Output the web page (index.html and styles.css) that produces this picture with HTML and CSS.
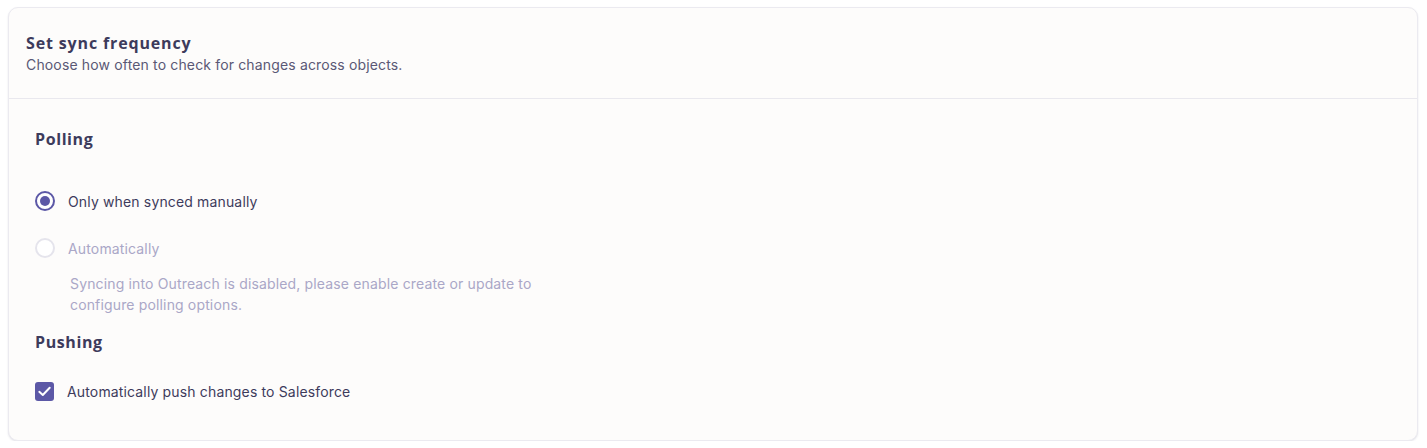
FILE: index.html
```html
<!DOCTYPE html>
<html lang="en">
<head>
<meta charset="utf-8">
<title>Set sync frequency</title>
<link rel="stylesheet" href="styles.css">
</head>
<body>
<section class="card">
  <header class="card-header">
    <h2 class="card-title">Set sync frequency</h2>
    <p class="card-subtitle">Choose how often to check for changes across objects.</p>
  </header>
  <div class="card-body">
    <h3 class="section-title">Polling</h3>
    <div class="options">
      <label class="option">
        <span class="radio radio-checked"><span class="radio-dot"></span></span>
        <span class="option-label">Only when synced manually</span>
      </label>
      <label class="option option-disabled">
        <span class="radio radio-disabled"></span>
        <span class="option-label">Automatically</span>
      </label>
      <p class="help">Syncing into Outreach is disabled, please enable create or update to configure polling options.</p>
    </div>
    <h3 class="section-title pushing">Pushing</h3>
    <label class="option check-option">
      <span class="checkbox">
        <svg width="15" height="15" viewBox="0 0 15 15"><path d="M2.3 7.8 L5.8 11 L12.7 3.8" fill="none" stroke="#fff" stroke-width="2" stroke-linecap="round" stroke-linejoin="round"/></svg>
      </span>
      <span class="option-label">Automatically push changes to Salesforce</span>
    </label>
  </div>
</section>
</body>
</html>
```
FILE: styles.css
```css
html, body {
  margin: 0;
  padding: 0;
  background: #ffffff;
}
body {
  padding: 7px 9px 0 8px;
  font-family: Inter, Roboto, "Liberation Sans", sans-serif;
  color: #3d3b5c;
  letter-spacing: 0.15px;
}
.card {
  background: #fdfcfb;
  border: 1px solid #ebeaf0;
  border-radius: 10px;
  box-shadow: 0 1px 2px rgba(60, 58, 90, 0.14);
  height: 434px;
  box-sizing: border-box;
}
.card-header {
  padding: 25px 17px 0 17px;
  height: 91px;
  box-sizing: border-box;
  border-bottom: 1px solid #e9e8ee;
}
.card-title {
  margin: 0;
  font-family: "Open Sans", Inter, sans-serif;
  font-weight: 700;
  font-size: 16px;
  line-height: 20px;
  letter-spacing: 0.85px;
  color: #3d3b5c;
}
.card-subtitle {
  margin: 3px 0 0;
  font-size: 14px;
  line-height: 18px;
  color: #5a5875;
}
.card-body {
  padding: 29px 26px 0 26px;
}
.section-title {
  margin: 0;
  font-family: "Open Sans", Inter, sans-serif;
  font-weight: 700;
  font-size: 16px;
  line-height: 22px;
  letter-spacing: 0.6px;
  color: #3d3b5c;
}
.options {
  padding-top: 39px;
}
.option {
  display: flex;
  align-items: center;
  gap: 13px;
  height: 24px;
}
.option + .option {
  margin-top: 23px;
}
.option-label {
  font-size: 14px;
  color: #3d3b5c;
}
.option-disabled .option-label {
  color: #aaa7c7;
}
.radio {
  width: 20px;
  height: 20px;
  box-sizing: border-box;
  border-radius: 50%;
  display: flex;
  align-items: center;
  justify-content: center;
  flex: none;
}
.radio-checked {
  border: 2px solid #5c58a6;
  background: #fff;
}
.radio-dot {
  width: 10px;
  height: 10px;
  border-radius: 50%;
  background: #5c58a6;
}
.radio-disabled {
  border: 2px solid #e5e4ec;
  background: #fff;
}
.help {
  margin: 13px 0 0 35px;
  width: 490px;
  font-size: 14px;
  line-height: 21px;
  color: #aaa7c7;
}
.pushing {
  margin-top: 16px;
}
.check-option {
  margin-top: 26px;
  gap: 13px;
}
.checkbox {
  width: 19px;
  height: 19px;
  border-radius: 3px;
  background: #5c58a6;
  display: flex;
  align-items: center;
  justify-content: center;
  flex: none;
}
.checkbox svg {
  display: block;
}
```
